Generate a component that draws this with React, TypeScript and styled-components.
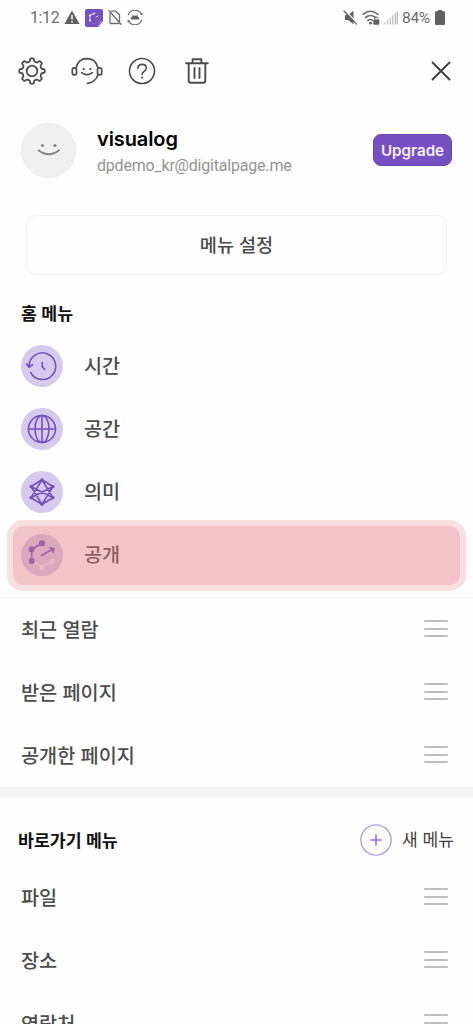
import React from 'react';
import styled, { createGlobalStyle } from 'styled-components';

const GlobalStyle = createGlobalStyle`
  * { box-sizing: border-box; }
  html, body { margin: 0; background: #fefefe; }
  body { font-family: Inter, "Noto Sans CJK KR", sans-serif; overflow: hidden; }
  button { font: inherit; background: none; border: 0; padding: 0; }
  svg { display: block; flex: none; }
`;

const Screen = styled.main`
  width: 473px;
  height: 1024px;
  overflow: hidden;
  background: #fefefe;
`;

const StatusBar = styled.header`
  height: 35px;
  padding: 0 28px 0 30px;
  display: flex;
  justify-content: space-between;
  align-items: center;
  font: 400 16px Roboto, sans-serif;
  color: #6c6c6c;
`;

const StatusGroup = styled.div<{ $gap: number }>`
  display: flex;
  align-items: center;
  gap: ${(p) => p.$gap}px;
`;

const Clock = styled.span`
  width: 29px;
  letter-spacing: -0.4px;
`;

const Percent = styled.span`
  width: 29px;
  font-size: 15.5px;
  letter-spacing: -0.3px;
`;

const Toolbar = styled.nav`
  height: 71px;
  padding: 0 17px 0 17px;
  display: flex;
  justify-content: space-between;
  align-items: center;
`;

const Tools = styled.div`
  display: flex;
  gap: 25px;
`;

const IconButton = styled.button`
  width: 30px;
  height: 30px;
  display: flex;
  align-items: center;
  justify-content: center;
`;

const Profile = styled.section`
  height: 88px;
  padding: 0 21px 0 21px;
  display: flex;
  align-items: center;
`;

const Avatar = styled.div`
  width: 55px;
  height: 55px;
  border-radius: 50%;
  background: #f0f0f0;
  border: 1px solid #e9e9e9;
  display: flex;
  align-items: center;
  justify-content: center;
`;

const Identity = styled.div`
  flex: 1;
  padding: 3px 0 0 21px;
`;

const UserName = styled.div`
  font-size: 20px;
  line-height: 28px;
  font-weight: 600;
  letter-spacing: -0.1px;
  color: #000;
`;

const Email = styled.div`
  font-family: Roboto, sans-serif;
  font-size: 16px;
  line-height: 26px;
  letter-spacing: -0.2px;
  color: #939393;
`;

const UpgradeButton = styled.button`
  width: 79px;
  height: 32px;
  border-radius: 8px;
  background: #7450c3;
  border: 1px solid #6845b0;
  color: #f6f1ff;
  font-size: 15.2px;
  font-weight: 600;
`;

const MenuSettings = styled.button`
  display: block;
  width: 421px;
  height: 60px;
  margin: 21px 26px 0;
  border: 1.5px solid #f2f2f2;
  border-radius: 10px;
  font-size: 18.6px;
  font-weight: 500;
  line-height: 56px;
  color: #4a4a4a;
`;

const SectionTitle = styled.h2`
  margin: 0;
  font-size: 17.3px;
  line-height: 41px;
  font-weight: 600;
  color: #111;
`;

const HomeSection = styled.section`
  padding: 18px 0 11px;
  border-bottom: 1px solid #f3f3f3;
  ${SectionTitle} { padding-left: 21px; }
`;

const HomeRow = styled.div`
  position: relative;
  height: 63px;
  padding-left: 21px;
  display: flex;
  align-items: center;
  gap: 21px;
`;

const RoundIcon = styled.div`
  width: 42px;
  height: 42px;
  border-radius: 50%;
  background: #d5caec;
`;

const RowLabel = styled.span`
  font-size: 19.7px;
  font-weight: 500;
  line-height: 30px;
  color: #4d4d4d;
`;

const Highlight = styled.div`
  position: absolute;
  left: 7px;
  right: 7px;
  top: -3px;
  height: 71px;
  border: 6px solid rgba(228, 120, 128, 0.22);
  border-radius: 16px;
  background: rgba(228, 120, 128, 0.43);
  background-clip: padding-box;
`;

const ListRow = styled.div`
  height: 63px;
  padding: 0 25px 0 21px;
  display: flex;
  align-items: center;
  justify-content: space-between;
`;

const Handle = styled.div`
  width: 24px;
  height: 17px;
  margin-top: -2px;
  display: flex;
  flex-direction: column;
  justify-content: space-between;
`;

const HandleLine = styled.i`
  height: 2px;
  border-radius: 1px;
  background: #bdbdbd;
`;

const Band = styled.div`
  height: 11px;
  background: #f6f6f6;
`;

const ShortcutHeader = styled.div`
  height: 68px;
  padding: 17px 19px 0 18px;
  display: flex;
  align-items: center;
  justify-content: space-between;
`;

const NewMenu = styled.button`
  display: flex;
  align-items: center;
  gap: 10px;
  margin-top: -2px;
  font-size: 17.1px;
  line-height: 30px;
  color: #3f3f3f;
`;

const stroke = { fill: 'none', strokeLinecap: 'round', strokeLinejoin: 'round' } as const;

const Warning = () => (
  <svg width="16" height="15" viewBox="0 0 16 15">
    <path d="M8 .5 15.6 14H.4Z" fill="#606060" />
    <path d="M8 5v4.5M8 11v1.5" stroke="#fff" strokeWidth="1.5" />
  </svg>
);

const NoteApp = () => (
  <svg width="18" height="18" viewBox="0 0 18 18">
    <path d="M2 0h14a2 2 0 0 1 2 2v10l-5 6H2a2 2 0 0 1-2-2V2a2 2 0 0 1 2-2Z" fill="#7450c3" />
    <path d="M18 12h-4l-1 6Z" fill="#9274d5" />
    <path d="M5 11.5V6.5l4-2M11 8l2-1" stroke="#fff" strokeWidth=".8" {...stroke} />
    <circle cx="5" cy="11.5" r="1" fill="#fff" />
    <circle cx="5" cy="6.5" r="1" fill="#fff" />
    <circle cx="9" cy="4.5" r="1" fill="#fff" />
    <path d="m6 13 3 1.5 3-1.5" stroke="#8c6cd2" strokeWidth=".8" {...stroke} />
  </svg>
);

const NoSim = () => (
  <svg width="14" height="15" viewBox="0 0 14 15" stroke="#6c6c6c" strokeWidth="1.3" {...stroke}>
    <path d="M3.5 1.2h4.2l3.8 3.6v6.7M10.8 13.5H3.3Q2 13.5 2 12.2V3.5M1 .8l12 13.4" />
  </svg>
);

const SyncPhone = () => (
  <svg width="16" height="15" viewBox="0 0 16 15">
    <path d="M1.3 4.8A7 6.7 0 0 1 14.3 4M14.7 10.2A7 6.7 0 0 1 1.7 11" stroke="#6c6c6c" strokeWidth="1.2" {...stroke} />
    <path d="m12.7 4.3 2.6.8.1-2.8ZM3.3 10.7.7 9.9l-.1 2.8Z" fill="#606060" />
    <path d="M3.7 9.4a4.3 4 0 0 1 8.6 0Z" fill="#606060" />
    <path d="m5.2 4.7.8 1.2m4.8-1.2-.8 1.2" stroke="#606060" strokeWidth=".8" />
  </svg>
);

const Muted = () => (
  <svg width="15" height="15" viewBox="0 0 15 15">
    <path d="M2 5h3l5.5-4.2v13.4L5 10H2Z" fill="#606060" />
    <path d="m1.8.2 13 13.6" stroke="#fefefe" strokeWidth="1.4" />
    <path d="M.7.8 13.8 14.4" stroke="#606060" strokeWidth="1.3" />
  </svg>
);

const WifiLock = () => (
  <svg width="18" height="16" viewBox="0 0 18 16">
    <path d="M1 4.3q7.5-6 15 0M3.4 7.5q5.1-4 10.2 0M5.8 10.5q2.7-2 5 0" stroke="#6c6c6c" strokeWidth="1.6" {...stroke} />
    <circle cx="8.5" cy="13.2" r="1.4" fill="#606060" />
    <rect x="11.3" y="9.5" width="6" height="5.2" rx=".7" fill="#606060" />
    <path d="M12.7 9.7V8.5a1.6 1.6 0 0 1 3.2 0v1.2" stroke="#606060" fill="none" />
  </svg>
);

const Signal = () => (
  <svg width="14" height="15" viewBox="0 0 15 15">
    <path d="M1 12.5V15M3.8 10v5M6.6 7.5V15M9.4 5v10" stroke="#c8c8c8" strokeWidth="1.6" />
    <path d="M12.2 2.7V15M14.3.5V15" stroke="#bdbdbd" strokeWidth="1.4" />
  </svg>
);

const Battery = () => (
  <svg width="10" height="15" viewBox="0 0 10 15">
    <path d="M3 0h4v1.3H9q1 0 1 1V14q0 1-1 1H1q-1 0-1-1V2.3q0-1 1-1h2Z" fill="#606060" />
  </svg>
);

const Gear = () => (
  <svg width="28" height="28" viewBox="0 0 28 28" stroke="#4c4c4c" strokeWidth="1.8" {...stroke}>
    <path d="M11.2 4.700Q11.900 4.400 12 3.400L12.100 2.200Q12.200 1.300 13 1.300H15Q15.800 1.300 15.900 2.200L16 3.400Q16.100 4.400 16.800 4.700L18.600 5.400Q19.300 5.700 20 5.100L21 4.300Q21.600 3.800 22.200 4.400L23.600 5.800Q24.200 6.400 23.700 7L22.900 8Q22.300 8.700 22.600 9.400L23.300 11.200Q23.600 11.900 24.600 12L25.800 12.100Q26.700 12.200 26.700 13V15Q26.700 15.800 25.800 15.900L24.600 16Q23.600 16.100 23.300 16.800L22.600 18.600Q22.300 19.300 22.900 20L23.700 21Q24.200 21.600 23.600 22.200L22.200 23.600Q21.600 24.200 21 23.700L20 22.900Q19.300 22.300 18.600 22.600L16.800 23.300Q16.100 23.600 16 24.600L15.900 25.800Q15.800 26.700 15 26.700H13Q12.200 26.700 12.100 25.800L12 24.600Q11.900 23.600 11.200 23.300L9.400 22.600Q8.700 22.300 8 22.900L7 23.700Q6.400 24.200 5.800 23.600L4.400 22.200Q3.800 21.600 4.300 21L5.100 20Q5.700 19.300 5.400 18.600L4.700 16.800Q4.400 16.100 3.400 16L2.200 15.900Q1.300 15.800 1.300 15V13Q1.300 12.200 2.200 12.100L3.400 12Q4.400 11.900 4.700 11.200L5.400 9.400Q5.700 8.700 5.100 8L4.300 7Q3.800 6.400 4.400 5.800L5.800 4.400Q6.400 3.800 7 4.300L8 5.100Q8.700 5.700 9.400 5.400Z" />
    <circle cx="14" cy="14" r="5.3" />
  </svg>
);

const Support = () => (
  <svg width="32" height="28" viewBox="0 0 32 28" stroke="#4c4c4c" strokeWidth="1.7" {...stroke}>
    <path d="M5 10.8C6.5 5.2 10.8 1.7 16 1.7S25.5 5.2 27 10.8M27 17.5c-1.3 5-5.5 8.5-10.6 8.8" />
    <rect x="1.3" y="10.9" width="4.2" height="7" rx="1.9" />
    <rect x="26.5" y="10.9" width="4.2" height="7" rx="1.9" />
    <path d="M10.8 15.600q5.200 4.200 10.400 0" />
    <path d="M12.700 12v.1M19.300 12v.1" strokeWidth="2.2" />
  </svg>
);

const Help = () => (
  <svg width="28" height="28" viewBox="0 0 28 28" stroke="#4c4c4c" strokeWidth="1.6" {...stroke}>
    <circle cx="14" cy="14" r="12.5" />
    <path d="M9.9 11.3c.1-2.3 1.7-3.9 4.2-3.9 2.4 0 4.2 1.5 4.2 3.600 0 1.800-1 2.700-2.300 3.500-1.400.9-1.900 1.500-1.900 3.100" />
    <path d="M14.1 20.6v.1" strokeWidth="2" />
  </svg>
);

const Trash = () => (
  <svg width="26" height="28" viewBox="0 0 26 28" stroke="#4c4c4c" strokeWidth="1.9" {...stroke}>
    <path d="M2.2 6.3h21.6M4.7 6.5v17.3q0 2 2 2h12.6q2 0 2-2V6.5M8.6 6V2.2h8.8V6M10.5 11v10M15.5 11v10" />
  </svg>
);

const Close = () => (
  <svg width="20" height="20" viewBox="0 0 20 20" stroke="#3c3c3c" strokeWidth="1.8" {...stroke}>
    <path d="m1.5 1.5 17 17M18.5 1.5l-17 17" />
  </svg>
);

const Smile = () => (
  <svg width="26" height="16" viewBox="0 0 26 16">
    <circle cx="6.5" cy="3.5" r="1.6" fill="#858585" />
    <circle cx="19" cy="3.5" r="1.6" fill="#858585" />
    <path d="M2.5 8.2q10.3 8 20.6 0" stroke="#858585" strokeWidth="1.8" {...stroke} />
  </svg>
);

const menuIcon = { width: 42, height: 42, viewBox: '0 0 42 42', stroke: '#7450c3', strokeWidth: 1.6, ...stroke };

const TimeIcon = () => (
  <svg {...menuIcon}>
    <path d="M8.1 21.5A13.3 13.3 0 1 1 9.6 27.3M5.6 18.8l2.5 3.4 3.4-2.6M21.2 17.5v4.2l2.4 2.6" />
  </svg>
);

const SpaceIcon = () => (
  <svg {...menuIcon}>
    <circle cx="21" cy="21" r="13.5" />
    <ellipse cx="21" cy="21" rx="7" ry="13.5" />
    <path d="M21 7.5v27M7.5 21h27" />
  </svg>
);

const MeaningIcon = () => (
  <svg {...menuIcon}>
    <path d="M10 15.5 21 8.8l11 6.7M10 26.7l11 6.6 11-6.6M10 26.7 21 8.8l11 17.9M10 15.5l11 17.8 11-17.8M10 15.5l22 11.2M32 15.5 10 26.7" />
    <g fill="#7450c3" stroke="none">
      <circle cx="21" cy="8.8" r="1.6" />
      <circle cx="32" cy="15.5" r="1.6" />
      <circle cx="32" cy="26.7" r="1.6" />
      <circle cx="21" cy="33.3" r="1.6" />
      <circle cx="10" cy="26.7" r="1.6" />
      <circle cx="10" cy="15.5" r="1.6" />
    </g>
  </svg>
);

const PublicIcon = () => (
  <svg {...menuIcon}>
    <g stroke="#eee8f8" fill="#eee8f8">
      <path d="m10.7 27 10.3 6 10.5-6" fill="none" />
      <circle cx="21" cy="33" r="2" />
      <circle cx="31.5" cy="27" r="2" />
    </g>
    <path d="M10.7 27V15.3L21 9.2M20.500 21.500l11-6.200" />
    <g fill="#7450c3">
      <circle cx="10.7" cy="27" r="2.2" />
      <circle cx="10.7" cy="15.3" r="2.2" />
      <circle cx="21" cy="9.2" r="2.2" />
      <path d="m28.8 13.8 4.6.4-1.2 4.4Z" strokeWidth="1" />
    </g>
  </svg>
);

const Plus = () => (
  <svg width="32" height="32" viewBox="0 0 32 32" {...stroke}>
    <circle cx="16" cy="16" r="15.1" stroke="#b39be3" strokeWidth="1.4" />
    <path d="M11 16h10M16 11v10" stroke="#8e6fd2" strokeWidth="1.6" />
  </svg>
);

const homeItems = [
  { label: '시간', Icon: TimeIcon },
  { label: '공간', Icon: SpaceIcon },
  { label: '의미', Icon: MeaningIcon },
  { label: '공개', Icon: PublicIcon, active: true },
];

const ListItem = ({ label }: { label: string }) => (
  <ListRow>
    <RowLabel>{label}</RowLabel>
    <Handle>
      <HandleLine />
      <HandleLine />
      <HandleLine />
    </Handle>
  </ListRow>
);

export default function App() {
  return (
    <>
      <GlobalStyle />
      <Screen>
        <StatusBar>
          <StatusGroup $gap={5}>
            <Clock>1:12</Clock>
            <Warning />
            <NoteApp />
            <NoSim />
            <SyncPhone />
          </StatusGroup>
          <StatusGroup $gap={4}>
            <Muted />
            <WifiLock />
            <Signal />
            <Percent>84%</Percent>
            <Battery />
          </StatusGroup>
        </StatusBar>
        <Toolbar>
          <Tools>
            <IconButton aria-label="설정"><Gear /></IconButton>
            <IconButton aria-label="고객 지원"><Support /></IconButton>
            <IconButton aria-label="도움말"><Help /></IconButton>
            <IconButton aria-label="휴지통"><Trash /></IconButton>
          </Tools>
          <IconButton aria-label="닫기"><Close /></IconButton>
        </Toolbar>
        <Profile>
          <Avatar><Smile /></Avatar>
          <Identity>
            <UserName>visualog</UserName>
            <Email>dpdemo_kr@digitalpage.me</Email>
          </Identity>
          <UpgradeButton>Upgrade</UpgradeButton>
        </Profile>
        <MenuSettings>메뉴 설정</MenuSettings>
        <HomeSection>
          <SectionTitle>홈 메뉴</SectionTitle>
          {homeItems.map(({ label, Icon, active }) => (
            <HomeRow key={label}>
              <RoundIcon><Icon /></RoundIcon>
              <RowLabel>{label}</RowLabel>
              {active && <Highlight />}
            </HomeRow>
          ))}
        </HomeSection>
        <ListItem label="최근 열람" />
        <ListItem label="받은 페이지" />
        <ListItem label="공개한 페이지" />
        <Band />
        <ShortcutHeader>
          <SectionTitle>바로가기 메뉴</SectionTitle>
          <NewMenu><Plus />새 메뉴</NewMenu>
        </ShortcutHeader>
        <ListItem label="파일" />
        <ListItem label="장소" />
        <ListItem label="연락처" />
      </Screen>
    </>
  );
}
